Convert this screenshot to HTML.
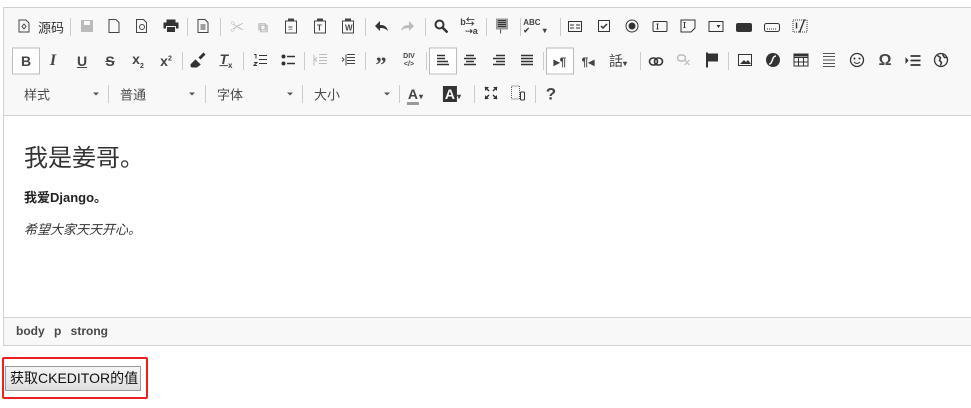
<!DOCTYPE html>
<html><head><meta charset="utf-8"><style>
*{margin:0;padding:0;box-sizing:border-box}
body{width:971px;height:408px;background:#fff;position:relative;overflow:hidden;font-family:"Liberation Sans","Noto Sans CJK SC",sans-serif;color:#333}
.ed{position:absolute;left:3px;top:7px;width:980px;height:339px;border:1px solid #d1d1d1}
.tb{position:absolute;left:0;top:0;right:0;height:108px;background:#f8f8f8;border-bottom:1px solid #d1d1d1}
.ct{position:absolute;left:0;top:108px;right:0;height:201px;background:#fff}
.bt{position:absolute;left:0;top:309px;right:0;height:28px;background:#f8f8f8;border-top:1px solid #d1d1d1}
.i{position:absolute;transform:translate(-50%,-50%);font-size:14px;line-height:1;color:#444;white-space:nowrap;font-weight:bold}
.g{color:#bbb}
.s{position:absolute;width:1px;height:18px;background:#ccc;transform:translateY(-50%)}
.box{position:absolute;border:1px solid #bcbcbc;background:#fff;width:28px;height:27px;transform:translate(-50%,-50%)}
.cb{position:absolute;transform:translateY(-50%);font-size:13px;color:#484848;font-weight:normal;white-space:nowrap}
.ar{position:absolute;transform:translate(-50%,-50%);width:0;height:0;border-left:3px solid transparent;border-right:3px solid transparent;border-top:3px solid #555}
</style></head><body>
<div class="ed">
<div class="tb"></div>
<div class="ct">
<div style="position:absolute;left:20px;top:22px;font-size:24px;color:#333;white-space:nowrap">我是姜哥。</div>
<div style="position:absolute;left:20px;top:71px;font-size:13px;font-weight:bold;color:#222;white-space:nowrap">我爱Django。</div>
<div style="position:absolute;left:20px;top:103px;font-size:13px;font-style:italic;color:#333;white-space:nowrap">希望大家天天开心。</div>
</div>
<div class="bt"><div style="position:absolute;left:12px;top:6px;font-size:12px;font-weight:bold;color:#484848;word-spacing:6px;white-space:nowrap">body p strong</div></div>
</div>
<div id="t" style="position:absolute;left:0;top:0;width:971px"></div>
<div style="position:absolute;left:2px;top:357px;width:146px;height:42px;border:2px solid #f02020;border-radius:2px"></div>
<div style="position:absolute;left:5px;top:366px;width:136px;height:25px;border:1px solid #9a9a9a;background:linear-gradient(#f6f6f6,#dedede);font-size:14px;color:#111;line-height:23px;padding-left:4px;white-space:nowrap">获取CKEDITOR的值</div>
<script>
const T=document.getElementById('t');
function add(h){T.insertAdjacentHTML('beforeend',h)}
function ic(x,y,t,c){add(`<span class="i ${c||''}" style="left:${x}px;top:${y}px">${t}</span>`)}
function sp(x,y){add(`<span class="s" style="left:${x}px;top:${y}px"></span>`)}
function bx(x,y){add(`<span class="box" style="left:${x}px;top:${y}px"></span>`)}
let y=27;
ic(24,y,'<svg width="12" height="14"><path d="M1 1h7l3 3v9H1z" fill="none" stroke="#444"/><path d="M6 5l-2 2.5 2 2.5 2-2.5z" fill="none" stroke="#444"/></svg>');
add('<span class="cb" style="left:38px;top:27px;font-size:13px;color:#333">源码</span>');
[70,187,220,365,425,486,520,560].forEach(x=>sp(x,y));
ic(87,y,'<svg width="14" height="14"><rect x="1" y="1" width="12" height="12" fill="#bbb"/><rect x="4" y="2" width="6" height="4" fill="#f8f8f8"/></svg>');
ic(114,y,'<svg width="11" height="14"><path d="M.5 .5h7l3 3v10H.5z" fill="none" stroke="#444"/></svg>');
ic(142,y,'<svg width="12" height="14"><path d="M.5 .5h7l3 3v10H.5z" fill="none" stroke="#444"/><circle cx="6" cy="8" r="2.5" fill="none" stroke="#444"/></svg>');
ic(171,y,'<svg width="15" height="13"><rect x="3" y="0" width="9" height="3" fill="#333"/><rect x="0" y="3" width="15" height="6" fill="#333"/><rect x="3" y="7" width="9" height="6" fill="#333" stroke="#f8f8f8"/></svg>');
ic(203,y,'<svg width="11" height="14"><path d="M.5 .5h7l3 3v10H.5z" fill="none" stroke="#444"/><path d="M3 6h5M3 8h5M3 10h5" stroke="#444"/></svg>');
ic(237,y,'✂','g');ic(263,y,'⧉','g');
['',"T","W"].forEach((s,k)=>ic(291+k*28.5,y,`<svg width="12" height="15"><rect x=".5" y="2.5" width="11" height="12" fill="none" stroke="#444"/><rect x="3" y="0" width="6" height="3" fill="#444"/><text x="3" y="12" font-size="8" fill="#444" font-family="Liberation Sans">${s||'≡'}</text></svg>`));
ic(381,y,'<svg width="14" height="12"><path d="M6 1L1 6l5 5V8c4 0 6 1 8 3-1-4-3-6-8-6z" fill="#333"/></svg>');
ic(408,y,'<svg width="14" height="12"><path d="M8 1l5 5-5 5V8C4 8 2 9 0 11c1-4 3-6 8-6z" fill="#bbb"/></svg>');
ic(441,y,'<svg width="14" height="14"><circle cx="5.5" cy="5.5" r="4" fill="none" stroke="#333" stroke-width="2"/><path d="M8.5 8.5l5 5" stroke="#333" stroke-width="2.5"/></svg>');
ic(469,y,'<span style="font-size:9px;line-height:9px;display:inline-block">b⇆<br>&nbsp;&nbsp;⇢a</span>');
ic(502,y,'<svg width="12" height="15"><rect width="12" height="11" fill="#999"/><path d="M2 2h8M2 4h8M2 6h8M2 8h8" stroke="#333"/><text x="4" y="15" font-size="5">I</text></svg>');
ic(535,y,'<span style="font-size:8px;line-height:8px;display:inline-block">ABC<br>✔</span><span style="font-size:8px"> ▾</span>');
ic(575,y,'<svg width="14" height="11"><rect x=".5" y=".5" width="13" height="10" fill="none" stroke="#333"/><path d="M2 4h4M8 4h4M2 7h4M8 7h4" stroke="#333"/></svg>');
ic(604,y,'<svg width="12" height="12"><rect x=".5" y=".5" width="11" height="11" fill="none" stroke="#333"/><path d="M3 6l2 2 4-4" stroke="#333" fill="none" stroke-width="1.5"/></svg>');
ic(632,y,'<svg width="13" height="13"><circle cx="6.5" cy="6.5" r="6" fill="none" stroke="#333"/><circle cx="6.5" cy="6.5" r="3.5" fill="#333"/></svg>');
ic(660,y,'<svg width="15" height="11"><rect x=".5" y=".5" width="14" height="10" rx="1" fill="none" stroke="#333"/><path d="M5 3v5M4 3h2M4 8h2" stroke="#333"/></svg>');
ic(688,y,'<svg width="15" height="13"><path d="M.5 .5h14v8l-4 4H.5z" fill="none" stroke="#333"/><path d="M4 3v5M3 3h2M3 8h2" stroke="#333"/></svg>');
ic(716,y,'<svg width="15" height="11"><rect x=".5" y=".5" width="14" height="10" fill="none" stroke="#333"/><path d="M8 4h4l-2 3z" fill="#333"/></svg>');
ic(744,y,'<svg width="16" height="9"><rect width="16" height="9" rx="2" fill="#333"/></svg>');
ic(772,y,'<svg width="16" height="9"><rect x=".5" y=".5" width="15" height="8" rx="2" fill="none" stroke="#333"/><path d="M3 6h10" stroke="#333" stroke-dasharray="1 1"/></svg>');
ic(800,y,'<svg width="15" height="15"><rect x=".5" y="1.5" width="14" height="12" fill="none" stroke="#333" stroke-dasharray="1 1"/><path d="M4 4v6M12 1L7 14" stroke="#333" stroke-width="1.4"/></svg>');
y=61;
bx(26,y);bx(443,y);bx(560,y);
ic(26,y,'B');ic(53,y,'<i style="font-family:Liberation Serif;font-size:16px">I</i>');
ic(82,y,'<u>U</u>');ic(110,y,'<s>S</s>');
ic(138,y,'x<sub style="font-size:7px">2</sub>');ic(166,y,'x<sup style="font-size:7px">2</sup>');
[182,243,304,365,426,543,640,728].forEach(x=>sp(x,y));
ic(198,y,'<svg width="15" height="15"><path d="M9 6l5-5M1 13l4-4 3 3-4 3z" stroke="#333" stroke-width="3" fill="#333"/></svg>');
ic(226,y,'<i style="text-decoration:underline">T</i><sub style="font-size:8px">x</sub>');
ic(260,y,'<svg width="14" height="13"><path d="M1 1h2v4M6 2h8M6 6h8M1 9h3l-3 3h3M6 10h8" stroke="#333" fill="none"/></svg>');
ic(288,y,'<svg width="14" height="13"><circle cx="2.5" cy="3" r="2" fill="#333"/><circle cx="2.5" cy="10" r="2" fill="#333"/><path d="M6 3h8M6 10h8" stroke="#333" stroke-width="1.5"/></svg>');
ic(320,y,'<svg width="14" height="13"><path d="M6 1h8M6 4h8M6 7h8M6 10h8M1 1v11" stroke="#bbb"/><path d="M4 4L2 6l2 2" stroke="#bbb" fill="none"/></svg>');
ic(348,y,'<svg width="14" height="13"><path d="M6 1h8M6 4h8M6 7h8M6 10h8M5 1v11" stroke="#444"/><path d="M1 4l2 2-2 2" stroke="#444" fill="none"/></svg>');
ic(381,y,'<span style="font-size:22px;position:relative;top:4px;font-family:Liberation Serif">”</span>');
ic(409,y,'<span style="font-size:7px;line-height:8px;display:inline-block;text-align:center">DIV<br>&lt;/&gt;</span>');
[443,470,499,527].forEach((x,k)=>{let p=[['1','9','1','9','1','12'],['3','11','1','13','3','11'],['4','13','1','13','4','13'],['1','13','1','13','1','13']][k];ic(x,y,`<svg width="14" height="12"><path d="M${p[0]} 1.5h${p[1]-p[0]}M${p[2]} 4.5h${p[3]-p[2]}M${p[4]} 7.5h${p[5]-p[4]}M1 10.5h12" stroke="#333" stroke-width="1.6"/></svg>`)});
ic(560,y,'<span style="font-size:12px">▸¶</span>');ic(588,y,'<span style="font-size:12px">¶◂</span>');
ic(618,y,'<span style="font-weight:normal">話</span><span style="font-size:8px">▾</span>');
ic(656,y,'<svg width="15" height="9"><rect x="1" y="1" width="8" height="7" rx="3.5" fill="none" stroke="#333" stroke-width="1.6"/><rect x="6" y="1" width="8" height="7" rx="3.5" fill="none" stroke="#333" stroke-width="1.6"/></svg>');
ic(684,y,'<svg width="15" height="12"><rect x="1" y="1" width="8" height="6" rx="3" fill="none" stroke="#bbb" stroke-width="1.5"/><path d="M8 6l5 5M13 6l-5 5" stroke="#bbb"/></svg>');
ic(712,y,'<svg width="12" height="15"><path d="M1 0v15" stroke="#333" stroke-width="2"/><path d="M2 1h10v8H2z" fill="#333"/></svg>');
ic(745,y,'<svg width="14" height="12"><rect x=".5" y=".5" width="13" height="11" fill="none" stroke="#333"/><path d="M2 10l4-4 2 2 2-2 3 4z" fill="#333"/></svg>');
ic(773,y,'<svg width="14" height="14"><circle cx="7" cy="7" r="7" fill="#333"/><path d="M10 3C7 3 7 6 6 8s-1 3-3 3" stroke="#f8f8f8" stroke-width="1.5" fill="none"/></svg>');
ic(801,y,'<svg width="15" height="13"><rect x=".5" y=".5" width="14" height="12" fill="none" stroke="#333"/><path d="M0 4h15M5 4v9M10 4v9M0 8.5h15" stroke="#333"/><rect width="15" height="3" fill="#333"/></svg>');
ic(829,y,'<svg width="14" height="15"><path d="M1 1h12M1 4h12M1 7.5h12M1 11h12M1 14h12" stroke="#555"/></svg>');
ic(857,y,'<svg width="15" height="15"><circle cx="7.5" cy="7.5" r="6.5" fill="none" stroke="#333" stroke-width="1.3"/><circle cx="5" cy="6" r="1" fill="#333"/><circle cx="10" cy="6" r="1" fill="#333"/><path d="M4.5 9.5q3 3 6 0" stroke="#333" fill="none"/></svg>');
ic(885,y,'<span style="font-size:16px">Ω</span>');
ic(913,y,'<svg width="15" height="11"><path d="M0 2l3 3.5L0 9z" fill="#333"/><path d="M5 1h10M5 5.5h10M5 10h10" stroke="#333" stroke-width="1.7"/></svg>');
ic(941,y,'<svg width="15" height="15"><circle cx="7.5" cy="7.5" r="6.5" fill="none" stroke="#333" stroke-width="1.3"/><path d="M4 3l3 2-1 3 2 2-1 3M9 2l2 3 2 0" stroke="#333" stroke-width="1.5" fill="none"/></svg>');
y=94;
[['样式',24,96,108],['普通',120,192,205],['字体',217,290,302],['大小',314,387,399]].forEach(a=>{add(`<span class="cb" style="left:${a[1]}px;top:${y}px">${a[0]}</span><span class="ar" style="left:${a[2]}px;top:${y}px"></span>`);sp(a[3],y)});
ic(415,y,'<span style="border-bottom:3px solid #999;padding:0 1px">A</span><span style="font-size:8px">▾</span>');
ic(452,y,'<span style="background:#333;color:#f8f8f8;padding:0 2px">A</span><span style="font-size:8px">▾</span>');
sp(474,y);sp(535,y);
ic(491,y,'<svg width="14" height="14"><path d="M1 1h4L1 5zM13 1H9l4 4zM1 13h4L1 9zM13 13H9l4-4z" fill="#333"/><path d="M1 1l4 4M13 1L9 5M1 13l4-4M13 13L9 9" stroke="#333" stroke-width="1.5"/></svg>');
ic(518,y,'<svg width="14" height="15"><rect x=".5" y=".5" width="8" height="13" fill="none" stroke="#555" stroke-dasharray="1 1"/><rect x="9.5" y="6.5" width="4" height="8" rx="1" fill="none" stroke="#333"/></svg>');
ic(551,y,'<span style="font-size:17px">?</span>');
</script>
</body></html>
